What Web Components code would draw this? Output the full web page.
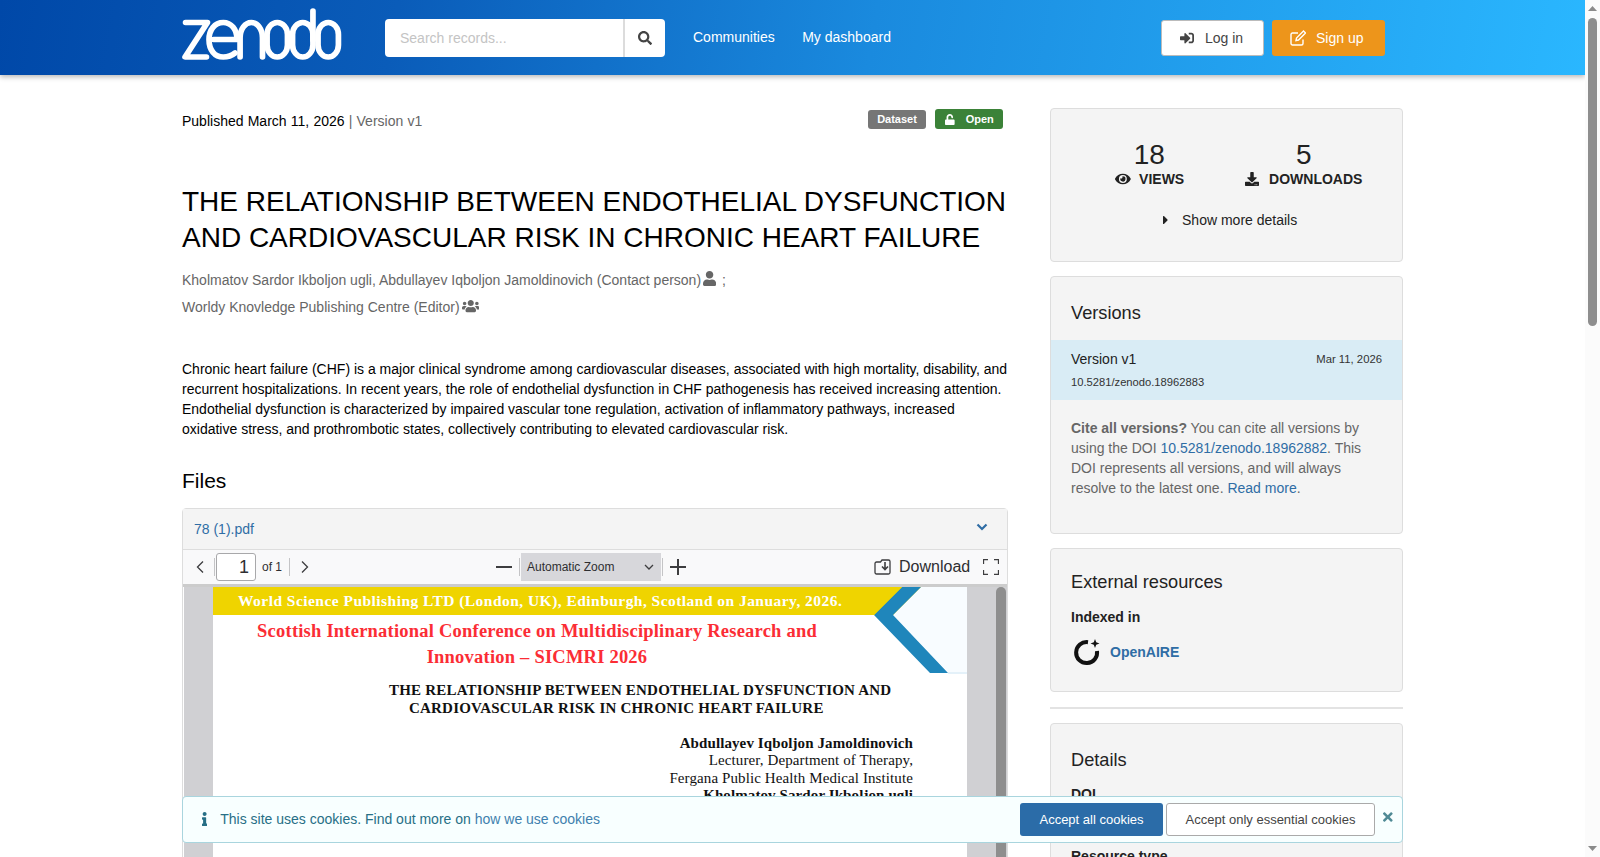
<!DOCTYPE html>
<html lang="en">
<head>
<meta charset="utf-8">
<title>Zenodo record</title>
<style>
    html, body { margin: 0; padding: 0; background: #fff; }
    body { width: 1585px; font: 14px/20px "Liberation Sans", Arial, sans-serif; color: #000; }
</style>
</head>
<body>
<zenodo-header></zenodo-header>

<record-page>
    <div slot="main">
        <record-meta></record-meta>
        <record-title>THE RELATIONSHIP BETWEEN ENDOTHELIAL DYSFUNCTION AND CARDIOVASCULAR RISK IN CHRONIC HEART FAILURE</record-title>
        <record-creators></record-creators>
        <record-abstract>Chronic heart failure (CHF) is a major clinical syndrome among cardiovascular diseases, associated with high mortality, disability, and recurrent hospitalizations. In recent years, the role of endothelial dysfunction in CHF pathogenesis has received increasing attention. Endothelial dysfunction is characterized by impaired vascular tone regulation, activation of inflammatory pathways, increased oxidative stress, and prothrombotic states, collectively contributing to elevated cardiovascular risk.</record-abstract>
        <files-box></files-box>
    </div>
    <div slot="side">
        <stats-card></stats-card>
        <versions-card></versions-card>
        <external-card></external-card>
        <details-card></details-card>
    </div>
</record-page>

<cookie-banner></cookie-banner>
<page-scrollbar></page-scrollbar>

<script>
// font awesome style solid glyphs, [viewBox width, path]
const ICONS = {
    search: [512, 'M505 442.7L405.3 343c-4.5-4.5-10.6-7-17-7H372c27.6-35.3 44-79.7 44-128C416 93.1 322.9 0 208 0S0 93.1 0 208s93.1 208 208 208c48.3 0 92.7-16.4 128-44v16.3c0 6.4 2.5 12.5 7 17l99.7 99.7c9.4 9.4 24.6 9.4 33.9 0l28.3-28.3c9.4-9.4 9.4-24.6.1-34zM208 336c-70.7 0-128-57.2-128-128 0-70.7 57.2-128 128-128 70.7 0 128 57.2 128 128 0 70.7-57.2 128-128 128z'],
    user: [448, 'M224 256c70.7 0 128-57.3 128-128S294.7 0 224 0 96 57.3 96 128s57.3 128 128 128zm89.6 32h-16.7c-22.2 10.2-46.9 16-72.9 16s-50.6-5.8-72.9-16h-16.7C60.2 288 0 348.2 0 422.4V464c0 26.5 21.5 48 48 48h352c26.5 0 48-21.5 48-48v-41.6c0-74.2-60.2-134.4-134.4-134.4z'],
    users: [640, 'M96 224c35.3 0 64-28.7 64-64s-28.7-64-64-64-64 28.7-64 64 28.7 64 64 64zm448 0c35.3 0 64-28.7 64-64s-28.7-64-64-64-64 28.7-64 64 28.7 64 64 64zm32 32h-64c-17.6 0-33.5 7.1-45.1 18.6 40.3 22.1 68.9 62 75.1 109.4h66c17.7 0 32-14.3 32-32v-32c0-35.3-28.7-64-64-64zm-256 0c61.9 0 112-50.1 112-112S381.9 32 320 32 208 82.1 208 144s50.1 112 112 112zm76.8 32h-8.3c-20.8 10-43.9 16-68.5 16s-47.6-6-68.5-16h-8.3C179.6 288 128 339.6 128 403.2V432c0 26.5 21.5 48 48 48h288c26.5 0 48-21.5 48-48v-28.8c0-63.6-51.6-115.2-115.2-115.2zm-223.7-13.4C161.5 263.1 145.6 256 128 256H64c-35.3 0-64 28.7-64 64v32c0 17.7 14.3 32 32 32h65.9c6.3-47.4 34.9-87.3 75.2-109.4z'],
    eye: [576, 'M572.52 241.4C518.29 135.59 410.93 64 288 64S57.68 135.64 3.48 241.41a32.35 32.35 0 0 0 0 29.19C57.71 376.41 165.07 448 288 448s230.32-71.64 284.52-177.41a32.35 32.35 0 0 0 0-29.19zM288 400a144 144 0 1 1 144-144 143.93 143.93 0 0 1-144 144zm0-240a95.31 95.31 0 0 0-25.31 3.79 47.85 47.85 0 0 1-66.9 66.9A95.78 95.78 0 1 0 288 160z'],
    download: [512, 'M216 0h80c13.3 0 24 10.7 24 24v168h87.7c17.8 0 26.7 21.5 14.1 34.1L269.7 378.3c-7.5 7.5-19.8 7.5-27.3 0L90.1 226.1c-12.6-12.6-3.7-34.1 14.1-34.1H192V24c0-13.3 10.7-24 24-24zm296 376v112c0 13.3-10.7 24-24 24H24c-13.3 0-24-10.7-24-24V376c0-13.3 10.7-24 24-24h146.7l49 49c20.1 20.1 52.5 20.1 72.6 0l49-49H488c13.3 0 24 10.7 24 24zm-124 88c0-11-9-20-20-20s-20 9-20 20 9 20 20 20 20-9 20-20zm64 0c0-11-9-20-20-20s-20 9-20 20 9 20 20 20 20-9 20-20z'],
    signin: [512, 'M416 448h-84c-6.6 0-12-5.4-12-12v-40c0-6.6 5.4-12 12-12h84c17.7 0 32-14.3 32-32V160c0-17.7-14.3-32-32-32h-84c-6.6 0-12-5.4-12-12V76c0-6.6 5.4-12 12-12h84c53 0 96 43 96 96v192c0 53-43 96-96 96zm-47-201L201 79c-15-15-41-4.5-41 17v96H24c-13.3 0-24 10.7-24 24v96c0 13.3 10.7 24 24 24h136v96c0 21.5 26 32 41 17l168-168c9.3-9.4 9.3-24.6 0-34z'],
    unlock: [448, 'M400 256H152V152.9c0-39.6 31.7-72.5 71.3-72.9 40-.4 72.7 32.1 72.7 72v16c0 13.3 10.7 24 24 24h32c13.3 0 24-10.7 24-24v-16C376 68 307.5-.3 223.5 0 139.5.3 72 69.5 72 153.5V256H48c-26.5 0-48 21.5-48 48v160c0 26.5 21.5 48 48 48h352c26.5 0 48-21.5 48-48V304c0-26.5-21.5-48-48-48z'],
    info: [192, 'M20 424.229h20V279.771H20c-11.046 0-20-8.954-20-20V212c0-11.046 8.954-20 20-20h112c11.046 0 20 8.954 20 20v212.229h20c11.046 0 20 8.954 20 20V492c0 11.046-8.954 20-20 20H20c-11.046 0-20-8.954-20-20v-47.771c0-11.046 8.954-20 20-20zM96 0C56.235 0 24 32.235 24 72s32.235 72 72 72 72-32.235 72-72S135.764 0 96 0z'],
    times: [352, 'M242.72 256l100.07-100.07c12.28-12.28 12.28-32.19 0-44.48l-22.24-22.24c-12.28-12.28-32.19-12.28-44.48 0L176 189.28 75.93 89.21c-12.28-12.28-32.19-12.28-44.48 0L9.21 111.45c-12.28 12.28-12.28 32.19 0 44.48L109.28 256 9.21 356.07c-12.28 12.28-12.28 32.19 0 44.48l22.24 22.24c12.28 12.28 32.2 12.28 44.48 0L176 322.72l100.07 100.07c12.28 12.28 32.2 12.28 44.48 0l22.24-22.24c12.28-12.28 12.28-32.19 0-44.48L242.72 256z'],
    caret: [192, 'M0 384.662V127.338c0-17.818 21.543-26.741 34.142-14.142l128.662 128.662c7.81 7.81 7.81 20.474 0 28.284L34.142 398.804C21.543 411.404 0 402.48 0 384.662z']
};

class Base extends HTMLElement {
    // every element here just stamps its markup into an open shadow root
    render(html) {
        const template = document.createElement('template');
        template.innerHTML = html;
        this.attachShadow({ mode: 'open' });
        this.shadowRoot.appendChild(template.content.cloneNode(true));
    }
}

class FaIcon extends Base {
    constructor() {
        super();
        const [w, d] = ICONS[this.getAttribute('name')];
        this.render(`
            <style>
                :host { display: inline-flex; align-items: center; justify-content: center; line-height: 1; }
                svg { height: 1em; width: auto; display: block; fill: currentColor; }
            </style>
            <svg viewBox="0 0 ${w} 512" aria-hidden="true"><path d="${d}"></path></svg>
        `);
    }
}

class ZenodoHeader extends Base {
    constructor() {
        super();
        this.render(`
            <style>
                :host {
                    display: block; height: 75px; position: relative; z-index: 2;
                    background: linear-gradient(100deg, #0048a8 0%, #0a5cb9 25%, #1a8ade 55%, #2ab7ff 100%);
                    box-shadow: 0 2px 5px rgba(0, 0, 0, .28);
                }
                .bar { display: flex; align-items: flex-start; width: 1221px; margin-left: 182px; height: 75px; }
                .logo { width: 161px; height: 60px; margin-top: 6px; flex: none; }
                .logo * { fill: none; stroke: #fff; stroke-width: 5.6; stroke-linecap: round; stroke-linejoin: round; }
                .search { display: flex; margin: 19px 0 0 42px; width: 280px; height: 38px; background: #fff; border-radius: 4px; overflow: hidden; }
                .search .q { flex: 1; padding-left: 15px; line-height: 38px; color: #c4c4c4; border-right: 2px solid #dcdcdc; }
                .search .go { width: 40px; display: flex; align-items: center; justify-content: center; color: #444; font-size: 14px; }
                nav { display: flex; gap: 27.5px; margin: 27px 0 0 28px; color: #fff; }
                .auth { display: flex; gap: 8px; margin: 20px 18px 0 auto; }
                .btn { box-sizing: border-box; height: 36px; display: flex; align-items: center; border-radius: 3px; font-size: 14px; }
                .login { width: 103px; padding-left: 18px; gap: 11px; background: #fff; color: #444; border: 1px solid #bbb; }
                .signup { width: 113px; padding-left: 18px; gap: 10px; background: #ed951b; color: #fff; }
                .signup svg { width: 16px; height: 16px; fill: none; stroke: #fff; stroke-width: 1.4; }
            </style>
            <div class="bar">
                <svg class="logo" viewBox="0 0 158 60" preserveAspectRatio="none" role="img" aria-label="Zenodo">
                    <path d="M3.5 16.5H25L3 51H24"></path>
                    <path d="M31 33.5H54C54 23 48 16.5 40.5 16.5C32 16.5 26.5 24 26.5 33.5C26.5 44 32 51 40.5 51C45.5 51 49 49.5 52 47"></path>
                    <path d="M57 51V32C57 23 62 16.5 68 16.5C74 16.5 79 23 79 32V51"></path>
                    <rect x="83.5" y="16.5" width="20" height="34.5" rx="10" ry="12"></rect>
                    <rect x="108.5" y="16.5" width="20" height="34.5" rx="10" ry="12"></rect>
                    <path d="M128.5 5V34"></path>
                    <rect x="133.5" y="16.5" width="20" height="34.5" rx="10" ry="12"></rect>
                </svg>
                <div class="search">
                    <div class="q">Search records...</div>
                    <div class="go"><fa-icon name="search"></fa-icon></div>
                </div>
                <nav><span>Communities</span><span>My dashboard</span></nav>
                <div class="auth">
                    <div class="btn login"><fa-icon name="signin"></fa-icon>Log in</div>
                    <div class="btn signup">
                        <svg viewBox="0 0 16 16"><path d="M13 9.5V13.5A1.5 1.5 0 0 1 11.5 15H2.5A1.5 1.5 0 0 1 1 13.5V4.5A1.5 1.5 0 0 1 2.5 3H8"></path><path d="M6 10.5L6.5 8L13.5 1L15.5 3L8.5 10Z"></path></svg>
                        Sign up
                    </div>
                </div>
            </div>
        `);
    }
}

class RecordPage extends Base {
    constructor() {
        super();
        this.render(`
            <style>
                :host { display: flex; gap: 42px; margin-left: 182px; width: 1221px; min-height: 2225px; }
                .main { width: 826px; flex: none; padding-top: 33px; }
                .side { width: 353px; flex: none; padding-top: 33px; }
            </style>
            <div class="main"><slot name="main"></slot></div>
            <div class="side"><slot name="side"></slot></div>
        `);
    }
}

class RecordMeta extends Base {
    constructor() {
        super();
        this.render(`
            <style>
                :host { display: flex; justify-content: space-between; align-items: flex-start; height: 20px; margin-top: 3px; color: #000; }
                .pub { word-spacing: .3px; }
                .ver { color: #666; }
                .badges { display: flex; gap: 9px; margin: -1px 5px 0 0; }
                .badge { display: flex; align-items: center; border-radius: 3px; color: #fff; font-size: 11px; font-weight: bold; line-height: 1; }
                .dataset { background: #767676; width: 58px; height: 19px; justify-content: center; margin-top: 0; }
                .open { background: #3b8238; width: 68px; height: 20px; margin-top: -1px; padding-left: 10px; gap: 11px; box-sizing: border-box; }
            </style>
            <div class="pub">Published March 11, 2026 <span class="ver">| Version v1</span></div>
            <div class="badges">
                <div class="badge dataset">Dataset</div>
                <div class="badge open"><fa-icon name="unlock"></fa-icon>Open</div>
            </div>
        `);
    }
}

class RecordTitle extends Base {
    constructor() {
        super();
        this.render(`
            <style>
                :host { display: block; margin-top: 53px; font-size: 28px; line-height: 36px; color: #000; }
            </style>
            <slot></slot>
        `);
    }
}

class RecordCreators extends Base {
    constructor() {
        super();
        this.render(`
            <style>
                :host { display: block; margin-top: 11px; color: #666; line-height: 27px; }
                fa-icon { font-size: 14px; vertical-align: -1px; margin-left: 2px; }
                .one { font-size: 15px; }
                .semi { margin-left: 2px; }
            </style>
            <div>Kholmatov Sardor Ikboljon ugli, Abdullayev Iqboljon Jamoldinovich (Contact person)<fa-icon class="one" name="user"></fa-icon>&nbsp;<span class="semi">;</span></div>
            <div>Worldy Knovledge Publishing Centre (Editor)<fa-icon name="users"></fa-icon></div>
        `);
    }
}

class RecordAbstract extends Base {
    constructor() {
        super();
        this.render(`
            <style>
                :host { display: block; margin-top: 38px; color: #000; }
            </style>
            <slot></slot>
        `);
    }
}

class FilesBox extends Base {
    constructor() {
        super();
        this.render(`
            <style>
                :host { display: block; margin-top: 30px; }
                h2 { margin: 0; font-size: 21px; font-weight: normal; line-height: 24px; }
                .box { margin-top: 15px; border: 1px solid #ddd; border-radius: 4px 4px 0 0; }
                .head {
                    height: 40px; background: #f4f4f4; border-bottom: 1px solid #ddd;
                    display: flex; align-items: center; justify-content: space-between;
                    padding: 0 19px 0 11px; color: #2f6da5;
                }
                .head svg { width: 12px; height: 8px; fill: none; stroke: #2f6da5; stroke-width: 2.2; margin-top: -4px; }
            </style>
            <h2>Files</h2>
            <div class="box">
                <div class="head">
                    <span>78 (1).pdf</span>
                    <svg viewBox="0 0 12 8"><path d="M1.5 1.5L6 6L10.5 1.5"></path></svg>
                </div>
                <pdf-viewer></pdf-viewer>
            </div>
        `);
    }
}

class PdfViewer extends Base {
    constructor() {
        super();
        this.render(`
            <style>
                :host { display: block; height: 760px; overflow: hidden; font-family: "Liberation Sans", Arial, sans-serif; }
                .tools {
                    height: 34px; background: #f9f9fa; border-bottom: 3px solid #ccc;
                    display: flex; align-items: center; color: #2e2e31; font-size: 12px;
                }
                .tools svg { flex: none; fill: none; stroke: #3d3d3f; stroke-width: 1.3; display: block; }
                .sep { width: 1px; height: 18px; background: #c4c4c6; flex: none; }
                .pg { box-sizing: border-box; width: 40px; height: 28px; border: 1px solid #a8a8aa; border-radius: 3px; background: #fff; font-size: 18px; line-height: 26px; text-align: right; padding-right: 6px; margin: 0 0 0 1px; flex: none; }
                .zoom { box-sizing: border-box; width: 140px; height: 28px; background: #d7d7db; margin-left: 1px; padding: 0 7px 0 6px; display: flex; align-items: center; justify-content: space-between; flex: none; }
                .dl { font-size: 16px; margin-left: 8px; }
                .pages { display: flex; height: 800px; margin-left: 1px; background: #d0d0d3; }
                .gutter { width: 29px; flex: none; }
                .rail { width: 39px; flex: none; display: flex; justify-content: flex-end; }
                .thumb { width: 10px; height: 300px; background: #8e8e8e; border-radius: 5px 5px 0 0; }
                .page { width: 754px; flex: none; background: #fff; position: relative; font-family: "Liberation Serif", "Times New Roman", serif; font-weight: bold; color: #111; }
                .band { height: 28px; background: #efd400; color: #fff; font-size: 15.5px; line-height: 28px; padding-left: 25px; letter-spacing: .46px; white-space: nowrap; }
                .conf { width: 648px; margin-top: 3px; text-align: center; color: #fb2d35; font-size: 18.5px; line-height: 26px; letter-spacing: .22px; white-space: nowrap; }
                .ttl { margin-top: 12px; font-size: 15px; line-height: 17.5px; letter-spacing: .2px; white-space: nowrap; padding-left: 176px; }
                .ttl div + div { padding-left: 20px; }
                .who { margin-top: 18px; padding-right: 54px; text-align: right; font-size: 15px; line-height: 17.3px; letter-spacing: .1px; white-space: nowrap; }
                .who span { display: block; font-weight: normal; }
                .corner { position: absolute; left: 0; top: 0; width: 754px; height: 90px; pointer-events: none; }
            </style>
            <div class="tools">
                <svg width="12" height="16" viewBox="0 0 12 16" style="margin-left:11px"><path d="M9 2.5L3.5 8L9 13.5"></path></svg>
                <div class="sep" style="margin-left:8px"></div>
                <div class="pg">1</div>
                <span style="margin-left:6px">of 1</span>
                <div class="sep" style="margin-left:7px"></div>
                <svg width="12" height="16" viewBox="0 0 12 16" style="margin-left:9px"><path d="M3 2.5L8.5 8L3 13.5"></path></svg>
                <svg width="18" height="16" viewBox="0 0 18 16" style="margin-left:184px"><path d="M1 8H17" style="stroke-width:2"></path></svg>
                <div class="sep" style="margin-left:6px"></div>
                <div class="zoom">
                    <span>Automatic Zoom</span>
                    <svg width="10" height="6" viewBox="0 0 10 6"><path d="M1 1L5 5L9 1"></path></svg>
                </div>
                <div class="sep" style="margin-left:1px"></div>
                <svg width="18" height="18" viewBox="0 0 18 18" style="margin-left:6px"><path d="M1 9H17M9 1V17" style="stroke-width:2"></path></svg>
                <svg width="17" height="16" viewBox="0 0 17 16" style="margin-left:187px"><path d="M2.5 3H6.5L8 1H14.5A1.5 1.5 0 0 1 16 2.5V13.5A1.5 1.5 0 0 1 14.5 15H2.5A1.5 1.5 0 0 1 1 13.5V4.5A1.5 1.5 0 0 1 2.5 3Z"></path><path d="M11 3V10M8 7.5L11 10.5L14 7.5" style="stroke-width:1.6"></path></svg>
                <span class="dl">Download</span>
                <svg width="16" height="16" viewBox="0 0 16 16" style="margin-left:13px"><path d="M.5 5V.5H5M11 .5H15.5V5M15.5 11V15.5H11M5 15.5H.5V11"></path></svg>
            </div>
            <div class="pages">
                <div class="gutter"></div>
                <div class="page">
                    <div class="band">World Science Publishing LTD (London, UK), Edinburgh, Scotland on January, 2026.</div>
                    <div class="conf">Scottish International Conference on Multidisciplinary Research and<br>Innovation &#8211; SICMRI 2026</div>
                    <div class="ttl">
                        <div>THE RELATIONSHIP BETWEEN ENDOTHELIAL DYSFUNCTION AND</div>
                        <div>CARDIOVASCULAR RISK IN CHRONIC HEART FAILURE</div>
                    </div>
                    <div class="who">
                        Abdullayev Iqboljon Jamoldinovich
                        <span>Lecturer, Department of Therapy,</span>
                        <span>Fergana Public Health Medical Institute</span>
                        Kholmatov Sardor Ikboljon ugli
                    </div>
                    <svg class="corner" viewBox="0 0 754 90">
                        <path d="M708 0H754V85H735L680 28Z" fill="#f8fcff"></path>
                        <path d="M689 0H708L680 28L735 86H717L661 28Z" fill="#1f86bb"></path>
                        <path d="M661 28L689 0H661Z" fill="#efd400"></path>
                        <path d="M735 85H754V87H735Z" fill="#e4f1f9"></path>
                    </svg>
                </div>
                <div class="rail"><div class="thumb"></div></div>
            </div>
        `);
    }
}

// shared look of the grey sidebar boxes
const CARD_CSS = `
    :host { display: block; box-sizing: border-box; background: #f4f4f4; border: 1px solid #ddd; border-radius: 4px; margin-bottom: 14px; color: #222; }
    h3 { margin: 0; font-size: 18.2px; font-weight: normal; line-height: 24px; color: #222; }
    a { color: #2f6da5; text-decoration: none; }
    b.label { display: block; font-weight: bold; color: #222; }
`;

class StatsCard extends Base {
    constructor() {
        super();
        this.render(`
            <style>
                ${CARD_CSS}
                :host { height: 154px; padding: 30px 21px 0; }
                .nums { display: grid; grid-template-columns: 1fr 1fr; text-align: center; }
                .n { font-size: 28px; line-height: 31px; }
                .k { font-weight: bold; line-height: 18px; display: flex; justify-content: center; align-items: center; gap: 8px; }
                .views { margin-left: 1px; }
                .dls { gap: 10px; }
                .more { margin-top: 22px; display: flex; justify-content: center; align-items: center; gap: 14px; margin-left: 7px; }
                .more fa-icon { font-size: 14px; }
            </style>
            <div class="nums">
                <div><div class="n">18</div><div class="k views"><fa-icon name="eye"></fa-icon>VIEWS</div></div>
                <div><div class="n">5</div><div class="k dls"><fa-icon name="download"></fa-icon>DOWNLOADS</div></div>
            </div>
            <div class="more"><fa-icon name="caret"></fa-icon>Show more details</div>
        `);
    }
}

class VersionsCard extends Base {
    constructor() {
        super();
        this.render(`
            <style>
                ${CARD_CSS}
                :host { height: 258px; padding-top: 24px; }
                h3 { padding-left: 20px; }
                .row { margin-top: 15px; height: 60px; background: #d9ecf5; padding: 9px 20px 0; box-sizing: border-box; }
                .top { display: flex; justify-content: space-between; align-items: center; }
                .date { font-size: 11.3px; color: #333; }
                .doi { font-size: 11.2px; color: #333; margin-top: 3px; }
                p { margin: 18px 20px 0; color: #666; }
                p b { color: #666; }
            </style>
            <h3>Versions</h3>
            <div class="row">
                <div class="top"><span>Version v1</span><span class="date">Mar 11, 2026</span></div>
                <div class="doi">10.5281/zenodo.18962883</div>
            </div>
            <p><b>Cite all versions?</b> You can cite all versions by using the DOI <a>10.5281/zenodo.18962882</a>. This DOI represents all versions, and will always resolve to the latest one. <a>Read more</a>.</p>
        `);
    }
}

class ExternalCard extends Base {
    constructor() {
        super();
        this.render(`
            <style>
                ${CARD_CSS}
                :host { height: 144px; padding: 21px 20px 0; margin-bottom: 0; }
                .lbl { margin-top: 13px; }
                .item { display: flex; align-items: center; gap: 9px; margin-top: 10px; font-weight: bold; }
                svg { width: 30px; height: 30px; display: block; flex: none; }
            </style>
            <h3>External resources</h3>
            <b class="label lbl">Indexed in</b>
            <div class="item">
                <svg viewBox="0 0 30 30">
                    <path d="M17 5.2A10.5 10.5 0 1 0 26 14" fill="none" stroke="#111" stroke-width="4"></path>
                    <path d="M24 2L25.2 5.3L28.5 6.5L25.2 7.7L24 11L22.8 7.7L19.5 6.5L22.8 5.3Z" fill="#111"></path>
                </svg>
                <a>OpenAIRE</a>
            </div>
        `);
    }
}

class DetailsCard extends Base {
    constructor() {
        super();
        this.render(`
            <style>
                ${CARD_CSS}
                :host { padding: 24px 20px 20px; margin-top: 31px; position: relative; }
                .rule { position: absolute; left: -1px; right: -1px; top: -17px; height: 2px; background: #e3e3e3; }
                .lbl { margin-top: 12px; }
                .val { margin-top: 5px; }
            </style>
            <div class="rule"></div>
            <h3>Details</h3>
            <b class="label lbl">DOI</b>
            <div class="val"><a>10.5281/zenodo.18962883</a></div>
            <b class="label" style="margin-top:17px">Resource type</b>
            <div class="val">Dataset</div>
        `);
    }
}

class CookieBanner extends Base {
    constructor() {
        super();
        this.render(`
            <style>
                :host {
                    position: fixed; left: 182px; top: 796px; width: 1221px; height: 47px; box-sizing: border-box;
                    background: #f8ffff; border: 1px solid #a9d5de; border-radius: 4px; z-index: 5;
                    display: flex; align-items: center; color: #276f86; font-size: 14px;
                    padding: 0 8px 0 19px;
                }
                .i { font-size: 14px; margin: -2px 13px 0 0; color: #276f86; }
                .t { margin-top: -2px; }
                a { color: #3f7fae; }
                .sp { flex: 1; }
                .b { box-sizing: border-box; height: 33px; display: flex; align-items: center; justify-content: center; border-radius: 3px; font-size: 13px; }
                .all { width: 143px; background: #2b6ca8; color: #fff; }
                .ess { width: 209px; margin-left: 3px; background: #fff; color: #444; border: 1px solid #aaa; }
                .x { font-size: 14px; color: #4f8a95; margin-left: 7px; margin-top: -5px; width: 12px; }
            </style>
            <fa-icon class="i" name="info"></fa-icon>
            <span class="t">This site uses cookies. Find out more on <a>how we use cookies</a></span>
            <div class="sp"></div>
            <div class="b all">Accept all cookies</div>
            <div class="b ess">Accept only essential cookies</div>
            <fa-icon class="x" name="times"></fa-icon>
        `);
    }
}

// the browser's own bar does not show in the photograph, so it is drawn over the page edge
class PageScrollbar extends Base {
    constructor() {
        super();
        this.render(`
            <style>
                :host {
                    position: fixed; right: 0; top: 0; bottom: 0; width: 15px; z-index: 6; background: #fbfbfb;
                    display: flex; flex-direction: column; align-items: center;
                }
                svg { width: 9px; height: 5px; fill: #8a8a8a; flex: none; }
                .up { margin-top: 6px; }
                .thumb { width: 9px; height: 308px; margin-top: 7px; background: #8e8e8e; border-radius: 5px; flex: none; }
                .down { margin-top: auto; margin-bottom: 6px; }
            </style>
            <svg class="up" viewBox="0 0 9 5"><path d="M4.5 0L9 5H0Z"></path></svg>
            <div class="thumb"></div>
            <svg class="down" viewBox="0 0 9 5"><path d="M0 0H9L4.5 5Z"></path></svg>
        `);
    }
}

customElements.define('fa-icon', FaIcon);
customElements.define('zenodo-header', ZenodoHeader);
customElements.define('record-page', RecordPage);
customElements.define('record-meta', RecordMeta);
customElements.define('record-title', RecordTitle);
customElements.define('record-creators', RecordCreators);
customElements.define('record-abstract', RecordAbstract);
customElements.define('files-box', FilesBox);
customElements.define('pdf-viewer', PdfViewer);
customElements.define('stats-card', StatsCard);
customElements.define('versions-card', VersionsCard);
customElements.define('external-card', ExternalCard);
customElements.define('details-card', DetailsCard);
customElements.define('cookie-banner', CookieBanner);
customElements.define('page-scrollbar', PageScrollbar);
</script>
</body>
</html>
